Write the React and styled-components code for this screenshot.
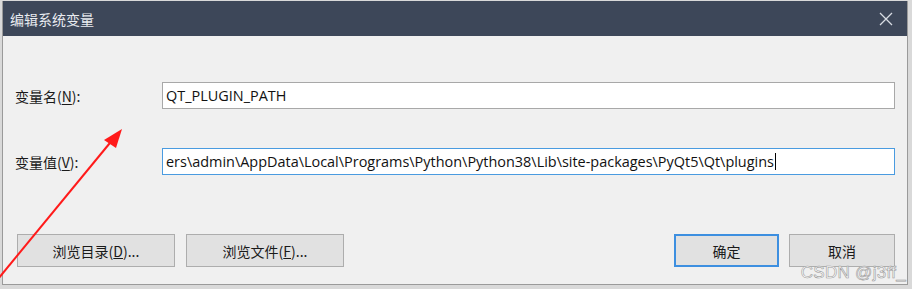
import React from 'react';
import styled, { createGlobalStyle } from 'styled-components';

const GlobalStyle = createGlobalStyle`
  html, body {
    margin: 0;
    padding: 0;
    background: #dcdcdc;
    width: 912px;
    height: 289px;
    overflow: hidden;
  }
  #root {
    position: relative;
    width: 912px;
    height: 289px;
  }
`;

const Page = styled.div`
  position: relative;
  width: 912px;
  height: 289px;
  padding: 1px 3px 0 2px;
  box-sizing: border-box;
  background: #d9d9d9;
  font-family: "Noto Sans CJK SC", "Noto Sans", sans-serif;
`;

const Window = styled.div`
  width: 906px;
  height: 284px;
  box-sizing: border-box;
  border: 1px solid #9a9a9a;
  border-top: none;
  background: #f0f0f0;
  display: flex;
  flex-direction: column;
`;

const TitleBar = styled.div`
  height: 35px;
  background: #3d4759;
  color: #e8ebf0;
  display: flex;
  align-items: center;
  justify-content: space-between;
  padding: 0 14px 0 7px;
  font-size: 14px;
`;

const CloseIcon = styled.svg`
  width: 14px;
  height: 14px;
`;

const Body = styled.div`
  flex: 1;
  display: flex;
  flex-direction: column;
  padding: 46px 12px 0 12px;
`;

const Row = styled.div`
  display: grid;
  grid-template-columns: 147px 1fr;
  align-items: center;
  margin-bottom: ${(p) => p.$gap || 0}px;
`;

const Label = styled.label`
  font-size: 14px;
  color: #1a1a1a;
  & u {
    text-decoration: underline;
    text-underline-offset: 2px;
  }
`;

const Field = styled.div`
  height: 27px;
  box-sizing: border-box;
  background: #fff;
  border: 1px solid ${(p) => (p.$focused ? '#4a9be0' : '#a8a8a8')};
  display: flex;
  align-items: center;
  padding-left: 3px;
  font-family: "Open Sans", "Noto Sans", sans-serif;
  font-size: 14.45px;
  color: #111;
  white-space: nowrap;
  overflow: hidden;
`;

const Caret = styled.span`
  display: inline-block;
  width: 1px;
  height: 17px;
  background: #000;
  margin-left: 1px;
`;

const Buttons = styled.div`
  display: flex;
  align-items: center;
  margin-top: 59px;
  padding-left: 2px;
`;

const Button = styled.button`
  height: 33px;
  width: ${(p) => p.$w}px;
  margin-right: ${(p) => p.$mr || 0}px;
  margin-left: ${(p) => (p.$push ? 'auto' : '0')};
  box-sizing: border-box;
  background: #e1e1e1;
  border: 1px solid ${(p) => (p.$primary ? '#3d8fe0' : '#adadad')};
  box-shadow: ${(p) => (p.$primary ? 'inset 0 0 0 1px #3d8fe0' : 'none')};
  font-family: "Noto Sans CJK SC", sans-serif;
  font-size: 14px;
  color: #1a1a1a;
  padding: 0;
`;

const Overlay = styled.svg`
  position: absolute;
  left: 0;
  top: 0;
  pointer-events: none;
`;

const Watermark = styled.div`
  position: absolute;
  right: 6px;
  bottom: 6px;
  font-family: "Liberation Sans", Arial, sans-serif;
  font-size: 17px;
  color: #ffffff;
  -webkit-text-stroke: 0.6px #9a9a9a;
  letter-spacing: 0.3px;
`;

export default function App() {
  return (
    <>
      <GlobalStyle />
      <Page>
        <Window>
          <TitleBar>
            <span>编辑系统变量</span>
            <CloseIcon viewBox="0 0 14 14">
              <path d="M1 1 L13 13 M13 1 L1 13" stroke="#d8dce3" strokeWidth="1.3" />
            </CloseIcon>
          </TitleBar>
          <Body>
            <Row $gap={39}>
              <Label>变量名(<u>N</u>):</Label>
              <Field>QT_PLUGIN_PATH</Field>
            </Row>
            <Row>
              <Label>变量值(<u>V</u>):</Label>
              <Field $focused>
                ers\admin\AppData\Local\Programs\Python\Python38\Lib\site-packages\PyQt5\Qt\plugins
                <Caret />
              </Field>
            </Row>
            <Buttons>
              <Button $w={158} $mr={11}>浏览目录(<u>D</u>)...</Button>
              <Button $w={158}>浏览文件(<u>F</u>)...</Button>
              <Button $w={105} $mr={10} $push $primary>确定</Button>
              <Button $w={106}>取消</Button>
            </Buttons>
          </Body>
        </Window>
        <Overlay width="912" height="289" viewBox="0 0 912 289">
          <line x1="-2" y1="279" x2="114" y2="138" stroke="#ff1a1a" strokeWidth="2" />
          <polygon points="122,129 104,140 116,148" fill="#ff1a1a" />
        </Overlay>
        <Watermark>CSDN @j3ff_</Watermark>
      </Page>
    </>
  );
}
